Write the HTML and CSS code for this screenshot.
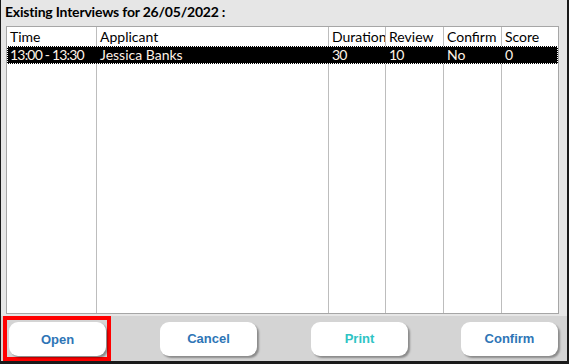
FILE: index.html
```html
<!DOCTYPE html>
<html lang="en">
<head>
    <meta charset="UTF-8">
    <title>Existing Interviews</title>
    <link rel="stylesheet" href="styles.css">
</head>
<body>
<div class="window">
    <div class="title">Existing Interviews for 26/05/2022 :</div>

    <div class="list">
        <div class="row head">
            <div class="cell c-time">Time</div>
            <div class="cell c-app">Applicant</div>
            <div class="cell c-dur">Duration</div>
            <div class="cell c-rev">Review</div>
            <div class="cell c-conf">Confirm</div>
            <div class="cell c-score">Score</div>
        </div>
        <div class="row selected">
            <div class="cell c-time num">13:00 - 13:30</div>
            <div class="cell c-app">Jessica Banks</div>
            <div class="cell c-dur num">30</div>
            <div class="cell c-rev num">10</div>
            <div class="cell c-conf">No</div>
            <div class="cell c-score num">0</div>
        </div>
        <div class="row filler">
            <div class="cell c-time"></div>
            <div class="cell c-app"></div>
            <div class="cell c-dur"></div>
            <div class="cell c-rev"></div>
            <div class="cell c-conf"></div>
            <div class="cell c-score"></div>
        </div>
    </div>

    <div class="buttons">
        <div class="focus"><button class="btn">Open</button></div>
        <button class="btn cancel">Cancel</button>
        <button class="btn print">Print</button>
        <button class="btn confirm">Confirm</button>
    </div>
</div>
</body>
</html>
```

FILE: styles.css
```css
html, body {
    margin: 0;
    padding: 0;
}

.window {
    width: 569px;
    height: 364px;
    box-sizing: border-box;
    background: #e6e6e6;
    border-left: 1px solid #1a1a1a;
    border-right: 2px solid #1a1a1a;
    border-bottom: 3px solid #1a1a1a;
    display: flex;
    flex-direction: column;
}

.title {
    font-family: "Lato", "Liberation Sans", sans-serif;
    font-weight: bold;
    font-size: 14px;
    color: #000;
    height: 26px;
    line-height: 24px;
    padding-left: 4px;
    letter-spacing: -0.2px;
}

.list {
    margin-left: 5px;
    width: 553px;
    height: 289px;
    box-sizing: border-box;
    background: #fff;
    border: 1px solid #a6a6a6;
    display: flex;
    flex-direction: column;
    font-family: "Lato", "Liberation Sans", sans-serif;
    font-size: 14px;
}

.row {
    display: flex;
}

.head {
    height: 19px;
    line-height: 19px;
}

.selected {
    height: 18px;
    line-height: 17px;
    background: #000;
    color: #fff2e6;
    outline: 1px dotted #fff;
    outline-offset: -1px;
}

.filler {
    flex: 1;
}

.cell {
    box-sizing: border-box;
    padding-left: 3px;
    border-right: 1px solid #bdbdbd;
    white-space: nowrap;
    overflow: hidden;
}

.num {
    letter-spacing: -0.8px;
}

.selected .cell {
    border-right-color: #000;
}

.c-time { width: 90px; }
.c-app { width: 232px; }
.c-dur { width: 57px; }
.c-rev { width: 58px; }
.c-conf { width: 58px; }
.c-score { flex: 1; border-right: none; }

.buttons {
    flex: 1;
    margin-top: 2px;
    background: #d4d4d4;
    display: flex;
    align-items: center;
    padding-left: 2px;
}

.focus {
    border: 4px solid #ff0000;
    padding: 2px 1px 1px 2px;
    display: flex;
}

.btn {
    width: 97px;
    height: 34px;
    border: none;
    border-radius: 9px;
    background: #fff;
    box-shadow: 2px 2px 2px rgba(0, 0, 0, 0.35);
    font-family: "Liberation Sans", Arial, sans-serif;
    font-weight: bold;
    font-size: 13px;
    color: #2e75b6;
    padding: 0;
}

.cancel { margin-left: 49px; }
.print { margin-left: 54px; color: #2ec4c4; }
.confirm { margin-left: 53px; }
```
